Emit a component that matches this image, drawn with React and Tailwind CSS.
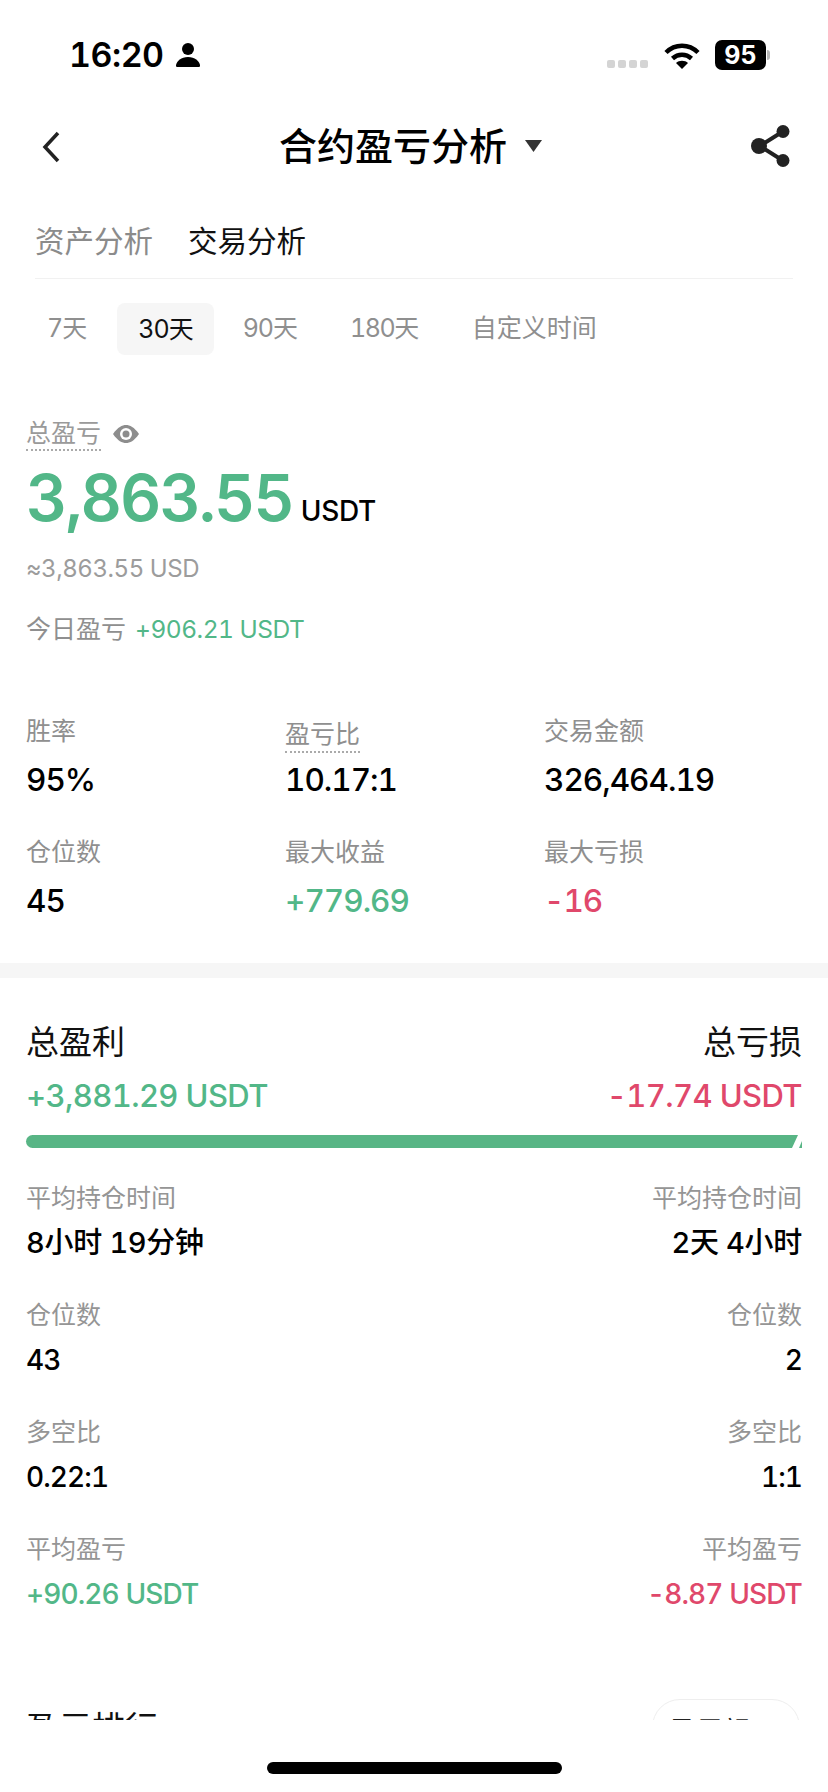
import React from "react";

const sans = "font-['Inter','Noto_Sans_CJK_SC',sans-serif] tabular-nums";

const StatusBar = () => (
    <div className="flex justify-between items-center h-[46px] mt-[32px] pl-[69px] pr-[58px]">
        <div className="flex items-center gap-[12px]">
            <span className="text-[34px] leading-[46px] font-semibold text-black tracking-[-0.5px]">16:20</span>
            <svg width="24" height="26" viewBox="0 0 24 26" className="fill-black">
                <circle cx="12" cy="7" r="6" />
                <path d="M1 25c-1 0-1-1-1-2 1-4 5-8 12-8s11 4 12 8c0 1 0 2-1 2z" />
            </svg>
        </div>
        <div className="flex items-center">
            <div className="flex gap-[3px] mt-[18px] mr-[16px]">
                <div className="w-[8px] h-[8px] rounded-[2px] bg-[#d4d4d4]" />
                <div className="w-[8px] h-[8px] rounded-[2px] bg-[#d4d4d4]" />
                <div className="w-[8px] h-[8px] rounded-[2px] bg-[#d4d4d4]" />
                <div className="w-[8px] h-[8px] rounded-[2px] bg-[#d4d4d4]" />
            </div>
            <svg width="36" height="27" viewBox="0 0 36 27" fill="none" className="stroke-black mr-[15px]">
                <path d="M2 10.5C11 1.5 25 1.5 34 10.5" strokeWidth="4.5" />
                <path d="M8.5 16.5C14 11.5 22 11.5 27.5 16.5" strokeWidth="4.5" />
                <path d="M18 27l-6-6c3-3 9-3 12 0z" className="fill-black stroke-none" />
            </svg>
            <div className="w-[51px] h-[30px] rounded-[7px] bg-black text-white text-[25px] leading-[30px] font-bold text-center">95</div>
            <div className="w-[3px] h-[10px] ml-[1px] rounded-r-[3px] bg-[#b5b5b5]" />
        </div>
    </div>
);

const NavBar = () => (
    <div className="relative flex justify-center items-center h-[60px] mt-[38px]">
        <svg width="24" height="34" viewBox="0 0 24 34" fill="none" className="absolute left-[39px] top-[14px] stroke-[#222]">
            <path d="M19 3L6 17l13 14" strokeWidth="3.5" />
        </svg>
        <div className="flex items-center ml-[-7px]">
            <span className="text-[38px] leading-[60px] font-medium text-black">合约盈亏分析</span>
            <svg width="17" height="12" viewBox="0 0 17 12" className="fill-[#333] ml-[18px]">
                <path d="M0 0h17l-8.5 12z" />
            </svg>
        </div>
        <svg width="42" height="44" viewBox="0 0 42 44" className="absolute right-[36px] top-[8px] fill-[#222] stroke-[#222]">
            <path d="M32 8L10 22l22 14" fill="none" strokeWidth="4" />
            <circle cx="33" cy="7.5" r="6.5" stroke="none" />
            <circle cx="9" cy="22" r="8" stroke="none" />
            <circle cx="33" cy="36.5" r="6.5" stroke="none" />
        </svg>
    </div>
);

const Tabs = () => (
    <div className="flex items-center gap-[35px] mx-[35px] mt-[40px] h-[63px] pb-[12px] border-b border-[#f1f1f1] text-[29.5px] leading-[42px]">
        <span className="text-[#8b8b8b]">资产分析</span>
        <span className="text-[#111]">交易分析</span>
    </div>
);

const RangeFilter = () => (
    <div className="flex items-center mt-[24px] ml-[26px] h-[52px] text-[25px] text-[#8f8f8f]">
        <span className="px-[21px] tracking-[-1px]">7天</span>
        <span className="ml-[10px] px-[21px] leading-[52px] rounded-[8px] bg-[#f6f6f6] text-[#111] tracking-[-1px]">30天</span>
        <span className="ml-[8px] px-[21px] tracking-[-1px]">90天</span>
        <span className="ml-[11px] px-[21px] tracking-[-1.5px]">180天</span>
        <span className="ml-[12px] px-[21px]">自定义时间</span>
    </div>
);

const Total = () => (
    <div className="px-[26px] mt-[60px]">
        <div className="flex items-center h-[38px]">
            <span className="text-[25px] leading-[32px] text-[#9a9a9a] border-b-2 border-dotted border-[#aaa]">总盈亏</span>
            <svg width="28" height="20" viewBox="0 0 28 20" className="ml-[11px]">
                <path d="M1 10C6 3 10 1 14 1s8 2 13 9c-5 7-9 9-13 9S6 17 1 10z" fill="#8d8d8d" />
                <circle cx="14" cy="10" r="6" fill="#fff" />
                <circle cx="14" cy="10" r="3.5" fill="#8d8d8d" />
            </svg>
        </div>
        <div className="flex items-baseline h-[76px] mt-[7px]">
            <span className="text-[64px] leading-[76px] font-semibold text-[#52b788] tracking-[-2px]">3,863.55</span>
            <span className="text-[28px] font-medium text-black ml-[8px] tracking-[-0.3px]">USDT</span>
        </div>
        <div className="text-[24px] leading-[34px] text-[#9c9c9c] mt-[16px] tracking-[-0.45px]">≈3,863.55 USD</div>
        <div className="flex text-[25px] leading-[34px] mt-[26px]">
            <span className="text-[#8f8f8f]">今日盈亏</span>
            <span className="ml-[9px] text-[24.5px] text-[#52b788] tracking-[-0.5px]">+906.21 USDT</span>
        </div>
    </div>
);

const Stat = ({label, value, color, dotted}) => (
    <div>
        <div className="h-[34px] text-[25px] leading-[32px] text-[#8f8f8f]">
            {dotted ? <span className="inline-block leading-[34px] mt-[2px] border-b-2 border-dotted border-[#aaa]">{label}</span> : label}
        </div>
        <div className={"mt-[10px] text-[31.5px] leading-[42px] font-medium tracking-[-1px] " + color}>{value}</div>
    </div>
);

const StatGrid = () => (
    <div className="grid grid-cols-[259px_259px_1fr] gap-y-[35px] px-[26px] mt-[69px]">
        <Stat label="胜率" value="95%" color="text-black" />
        <Stat label="盈亏比" value="10.17:1" color="text-black" dotted />
        <Stat label="交易金额" value="326,464.19" color="text-black" />
        <Stat label="仓位数" value="45" color="text-black" />
        <Stat label="最大收益" value="+779.69" color="text-[#52b788]" />
        <Stat label="最大亏损" value="-16" color="text-[#e0486b]" />
    </div>
);

const Row = ({label, left, right, leftColor, rightColor, big}) => (
    <div className="mt-[35px]">
        <div className="flex justify-between text-[25px] leading-[34px] text-[#959595]">
            <span>{label}</span>
            <span>{label}</span>
        </div>
        <div className={"flex justify-between mt-[8px] leading-[40px] font-medium " + (big ? "text-[29px] tracking-[-0.3px]" : "text-[28px] tracking-[-0.9px]")}>
            <span className={leftColor}>{left}</span>
            <span className={rightColor}>{right}</span>
        </div>
    </div>
);

const Breakdown = () => (
    <div className="px-[26px] pt-[44px]">
        <div className="flex justify-between text-[33px] leading-[40px] text-[#111]">
            <span>总盈利</span>
            <span>总亏损</span>
        </div>
        <div className="flex justify-between mt-[13px] text-[31px] leading-[42px] font-medium tracking-[-0.6px]">
            <span className="text-[#52b788]">+3,881.29 USDT</span>
            <span className="text-[#e0486b]">-17.74 USDT</span>
        </div>
        <div className="relative h-[13px] mt-[18px] mb-[-2px] rounded-l-[7px] bg-[#58b585]">
            <div className="absolute right-0 top-0 w-[10px] h-[13px] bg-white [clip-path:polygon(60%_0,100%_0,100%_100%,0_100%)]" />
            <div className="absolute right-0 bottom-0 w-[3px] h-[7px] bg-[#58b585] [clip-path:polygon(100%_0,100%_100%,0_100%)]" />
        </div>
        <Row big label="平均持仓时间" left="8小时 19分钟" right="2天 4小时" leftColor="text-black" rightColor="text-black" />
        <Row label="仓位数" left="43" right="2" leftColor="text-black" rightColor="text-black" />
        <Row label="多空比" left="0.22:1" right="1:1" leftColor="text-black" rightColor="text-black" />
        <Row label="平均盈亏" left="+90.26 USDT" right="-8.87 USDT" leftColor="text-[#52b788]" rightColor="text-[#e0486b]" />
    </div>
);

const Ranking = () => (
    <div className="flex justify-between items-start px-[26px] pt-[85px]">
        <span className="text-[33px] leading-[46px] mt-[6px] text-[#111]">盈亏排行</span>
        <div className="w-[148px] h-[56px] mr-[2px] pl-[18px] rounded-[28px] border-[1.5px] border-[#eee] text-[26px] leading-[61px] text-[#222]">盈亏额 ▾</div>
    </div>
);

export default function App() {
    return (
        <div className={"relative w-[828px] h-[1792px] bg-white overflow-hidden " + sans}>
            <div className="h-[1720px] overflow-hidden">
                <StatusBar />
                <NavBar />
                <Tabs />
                <RangeFilter />
                <Total />
                <StatGrid />
                <div className="h-[15px] mt-[41px] bg-[#f6f6f6]" />
                <Breakdown />
                <Ranking />
            </div>
            <div className="absolute left-[267px] top-[1762px] w-[295px] h-[12px] rounded-full bg-black" />
        </div>
    );
}
